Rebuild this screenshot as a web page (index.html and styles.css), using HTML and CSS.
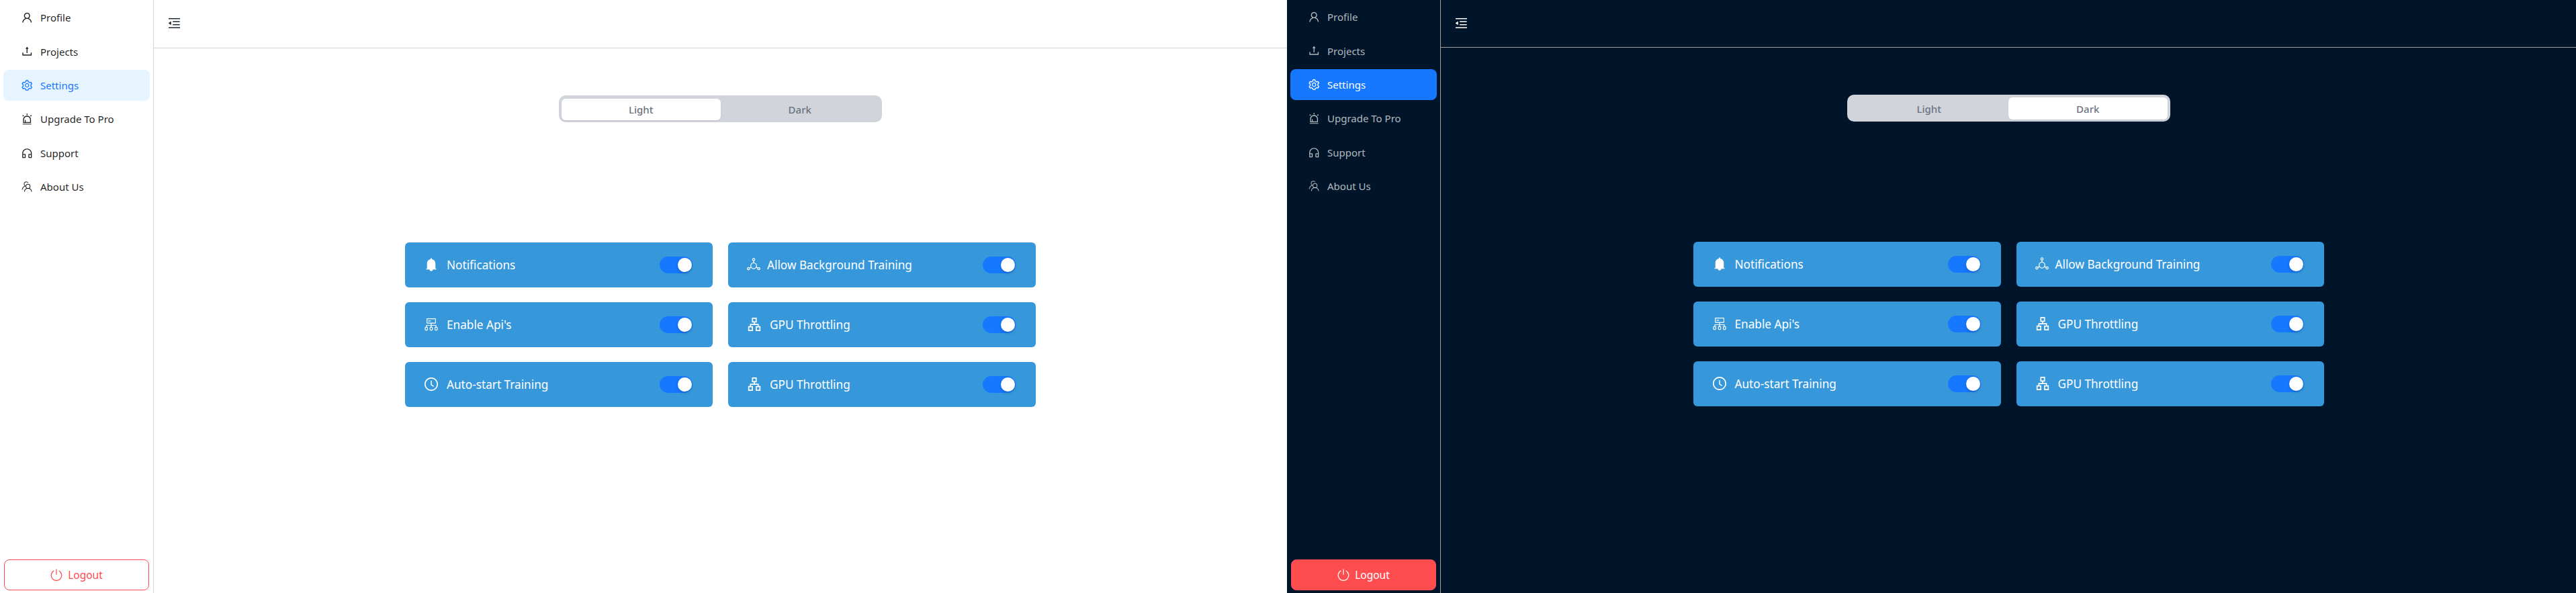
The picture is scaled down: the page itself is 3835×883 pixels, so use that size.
FILE: index.html
```html
<!DOCTYPE html>
<html lang="en">
<head>
<meta charset="utf-8">
<title>Settings</title>
<link rel="stylesheet" href="styles.css">
</head>
<body>
<svg class="defs" aria-hidden="true">
  <symbol id="i-user" viewBox="64 64 896 896"><path d="M858.5 763.6a374 374 0 0 0-80.6-119.5 375.63 375.63 0 0 0-119.5-80.6c-.4-.2-.8-.3-1.2-.5C719.5 518 760 444.7 760 362c0-137-111-248-248-248S264 225 264 362c0 82.7 40.5 156 102.8 201.1-.4.2-.8.3-1.2.5-44.8 18.9-85 46-119.5 80.6a375.63 375.63 0 0 0-80.6 119.5A371.7 371.7 0 0 0 136 901.8a8 8 0 0 0 8 8.2h60c4.4 0 7.9-3.5 8-7.8 2-77.2 33-149.5 87.8-204.3 56.7-56.7 132-87.9 212.2-87.9s155.5 31.2 212.2 87.9C779 752.7 810 825 812 902.2c.1 4.4 3.6 7.8 8 7.8h60a8 8 0 0 0 8-8.2c-1-47.8-10.9-94.3-29.5-138.2zM512 534c-45.9 0-89.1-17.9-121.6-50.4S340 407.9 340 362c0-45.9 17.9-89.1 50.4-121.6S466.1 190 512 190s89.1 17.9 121.6 50.4S684 316.1 684 362c0 45.9-17.9 89.1-50.4 121.6S557.9 534 512 534z"/></symbol>
  <symbol id="i-upload" viewBox="64 64 896 896"><path d="M400 317.7h73.9V656c0 4.4 3.6 8 8 8h60c4.4 0 8-3.6 8-8V317.7H624c6.7 0 10.4-7.7 6.3-12.9L518.3 163a8 8 0 0 0-12.6 0l-112 141.7c-4.1 5.3-.4 13 6.3 13zM878 626h-60c-4.4 0-8 3.6-8 8v154H214V634c0-4.4-3.6-8-8-8h-60c-4.4 0-8 3.6-8 8v198c0 17.7 14.3 32 32 32h684c17.7 0 32-14.3 32-32V634c0-4.4-3.6-8-8-8z"/></symbol>
  <symbol id="i-setting" viewBox="64 64 896 896"><path d="M924.8 625.7l-65.5-56c3.1-19 4.7-38.4 4.7-57.8s-1.6-38.8-4.7-57.8l65.5-56a32.03 32.03 0 0 0 9.3-35.2l-.9-2.6a443.74 443.74 0 0 0-79.7-137.9l-1.8-2.1a32.12 32.12 0 0 0-35.1-9.5l-81.3 28.9c-30-24.6-63.5-44-99.7-57.6l-15.7-85a32.05 32.05 0 0 0-25.8-25.7l-2.7-.5c-52.1-9.4-106.9-9.4-159 0l-2.7.5a32.05 32.05 0 0 0-25.8 25.7l-15.8 85.4a351.86 351.86 0 0 0-99 57.4l-81.9-29.1a32 32 0 0 0-35.1 9.5l-1.8 2.1a446.02 446.02 0 0 0-79.7 137.9l-.9 2.6c-4.5 12.5-.8 26.5 9.3 35.2l66.3 56.6c-3.1 18.8-4.6 38-4.6 57.1 0 19.2 1.5 38.4 4.6 57.1L99 625.5a32.03 32.03 0 0 0-9.3 35.2l.9 2.6c18.1 50.4 44.9 96.9 79.7 137.9l1.8 2.1a32.12 32.12 0 0 0 35.1 9.5l81.9-29.1c29.8 24.5 63.1 43.9 99 57.4l15.8 85.4a32.05 32.05 0 0 0 25.8 25.7l2.7.5a449.4 449.4 0 0 0 159 0l2.7-.5a32.05 32.05 0 0 0 25.8-25.7l15.7-85a350 350 0 0 0 99.7-57.6l81.3 28.9a32 32 0 0 0 35.1-9.5l1.8-2.1c34.8-41.1 61.6-87.5 79.7-137.9l.9-2.6c4.5-12.3.8-26.3-9.3-35zM788.3 465.9c2.5 15.1 3.8 30.6 3.8 46.1s-1.3 31-3.8 46.1l-6.6 40.1 74.7 63.9a370.03 370.03 0 0 1-42.6 73.6L721 702.8l-31.4 25.8c-23.9 19.6-50.5 35-79.3 45.8l-38.1 14.3-17.9 97a377.5 377.5 0 0 1-85 0l-17.9-97.2-37.8-14.5c-28.5-10.8-55-26.2-78.7-45.7l-31.4-25.9-93.4 33.2c-17-22.9-31.2-47.6-42.6-73.6l75.5-64.5-6.5-40c-2.4-14.9-3.7-30.3-3.7-45.5 0-15.3 1.2-30.6 3.7-45.5l6.5-40-75.5-64.5c11.3-26.1 25.6-50.7 42.6-73.6l93.4 33.2 31.4-25.9c23.7-19.5 50.2-34.9 78.7-45.7l37.9-14.3 17.9-97.2c28.1-3.2 56.8-3.2 85 0l17.9 97 38.1 14.3c28.7 10.8 55.4 26.2 79.3 45.8l31.4 25.8 92.8-32.9c17 22.9 31.2 47.6 42.6 73.6L781.8 426l6.5 39.9zM512 326c-97.2 0-176 78.8-176 176s78.8 176 176 176 176-78.8 176-176-78.8-176-176-176zm79.2 255.2A111.6 111.6 0 0 1 512 614c-29.9 0-58-11.7-79.2-32.8A111.6 111.6 0 0 1 400 502c0-29.9 11.7-58 32.8-79.2C454 401.6 482.1 390 512 390c29.9 0 58 11.6 79.2 32.8A111.6 111.6 0 0 1 624 502c0 29.9-11.7 58-32.8 79.2z"/></symbol>
  <symbol id="i-alert" viewBox="64 64 896 896"><path d="M193 796c0 17.7 14.3 32 32 32h574c17.7 0 32-14.3 32-32V563c0-176.2-142.8-319-319-319S193 386.8 193 563v233zm72-233c0-136.4 110.6-247 247-247s247 110.6 247 247v193H404V585c0-5.5-4.5-10-10-10h-44c-5.5 0-10 4.5-10 10v171h-75V563zm-48.1-252.5l39.6-39.6c3.1-3.1 3.1-8.2 0-11.3l-67.9-67.9a8.03 8.03 0 0 0-11.3 0l-39.6 39.6a8.03 8.03 0 0 0 0 11.3l67.9 67.9c3.1 3.1 8.1 3.1 11.3 0zm669.6-79.2l-39.6-39.6a8.03 8.03 0 0 0-11.3 0l-67.9 67.9a8.03 8.03 0 0 0 0 11.3l39.6 39.6c3.1 3.1 8.2 3.1 11.3 0l67.9-67.9c3.1-3.2 3.1-8.2 0-11.3zM832 892H192c-17.7 0-32 14.3-32 32v24c0 4.4 3.6 8 8 8h688c4.4 0 8-3.6 8-8v-24c0-17.7-14.3-32-32-32zM484 180h56c4.4 0 8-3.6 8-8V76c0-4.4-3.6-8-8-8h-56c-4.4 0-8 3.6-8 8v96c0 4.4 3.6 8 8 8z"/></symbol>
  <symbol id="i-support" viewBox="64 64 896 896"><path d="M512 128c-212.1 0-384 171.9-384 384v360c0 13.3 10.7 24 24 24h184c35.3 0 64-28.7 64-64V624c0-35.3-28.7-64-64-64H200v-48c0-172.3 139.7-312 312-312s312 139.7 312 312v48H688c-35.3 0-64 28.7-64 64v208c0 35.3 28.7 64 64 64h184c13.3 0 24-10.7 24-24V512c0-212.1-171.9-384-384-384zM328 632v192H200V632h128zm496 192H696V632h128v192z"/></symbol>
  <symbol id="i-team" viewBox="0 0 16 16"><g fill="none" stroke="currentColor" stroke-width="1"><circle cx="9.4" cy="7.2" r="3"/><path d="M4.2 15c.2-3 2.400-4.900 5.200-4.900s5 1.900 5.200 4.900"/><path d="M9.6 2.200C9 1.300 8 .8 7 .8 5.200.8 3.900 2.200 3.900 4c0 1.100.5 2.100 1.400 2.700C3 7.500 1.400 9.700 1 12.100"/></g></symbol>
  <symbol id="i-fold" viewBox="64 64 896 896"><path d="M408 442h480c4.4 0 8-3.6 8-8v-56c0-4.4-3.6-8-8-8H408c-4.4 0-8 3.6-8 8v56c0 4.4 3.6 8 8 8zm-8 204c0 4.4 3.6 8 8 8h480c4.4 0 8-3.6 8-8v-56c0-4.4-3.6-8-8-8H408c-4.4 0-8 3.6-8 8v56zm504-486H120c-4.4 0-8 3.6-8 8v56c0 4.4 3.6 8 8 8h784c4.4 0 8-3.6 8-8v-56c0-4.4-3.6-8-8-8zm0 632H120c-4.4 0-8 3.6-8 8v56c0 4.4 3.6 8 8 8h784c4.4 0 8-3.6 8-8v-56c0-4.4-3.6-8-8-8zM115.4 518.9L271.7 642c5.8 4.6 14.4.5 14.4-6.9V388.9c0-7.4-8.5-11.5-14.4-6.9L115.4 505.1a8.74 8.74 0 0 0 0 13.8z"/></symbol>
  <symbol id="i-power" viewBox="0 0 16 16"><g fill="none" stroke="currentColor" stroke-width="1.1"><path d="M11.2 2.500a6.900 6.900 0 1 1-6.400 0"/><path d="M8 .5v7.300"/></g></symbol>
  <symbol id="i-bell" viewBox="64 64 896 896"><path d="M816 768h-24V428c0-141.1-104.3-257.8-240-277.2V112c0-22.1-17.9-40-40-40s-40 17.9-40 40v38.8C336.3 170.2 232 286.9 232 428v340h-24c-17.7 0-32 14.3-32 32v32c0 4.4 3.6 8 8 8h216c0 61.8 50.2 112 112 112s112-50.2 112-112h216c4.4 0 8-3.6 8-8v-32c0-17.7-14.3-32-32-32z"/></symbol>
  <symbol id="i-clock" viewBox="64 64 896 896"><path d="M512 64C264.6 64 64 264.6 64 512s200.6 448 448 448 448-200.6 448-448S759.4 64 512 64zm0 820c-205.4 0-372-166.6-372-372s166.6-372 372-372 372 166.6 372 372-166.6 372-372 372z"/><path d="M686.7 638.6L544.1 535.5V288c0-4.4-3.6-8-8-8H488c-4.4 0-8 3.6-8 8v275.4c0 2.6 1.2 5 3.3 6.5l165.4 120.6c3.6 2.6 8.6 1.8 11.2-1.7l28.6-39c2.6-3.7 1.8-8.7-1.8-11.2z"/></symbol>
  <symbol id="i-apartment" viewBox="64 64 896 896"><path d="M908 640H804V488c0-4.4-3.6-8-8-8H548v-96h108c8.8 0 16-7.2 16-16V80c0-8.8-7.2-16-16-16H368c-8.8 0-16 7.2-16 16v288c0 8.8 7.2 16 16 16h108v96H228c-4.4 0-8 3.6-8 8v152H116c-8.8 0-16 7.2-16 16v288c0 8.8 7.2 16 16 16h288c8.8 0 16-7.2 16-16V656c0-8.8-7.2-16-16-16H292v-88h440v88H620c-8.8 0-16 7.2-16 16v288c0 8.8 7.2 16 16 16h288c8.8 0 16-7.2 16-16V656c0-8.8-7.2-16-16-16zm-564 76v168H176V716h168zm84-408V140h168v168H428zm420 576H680V716h168v168z"/></symbol>
  <symbol id="i-cluster" viewBox="0 0 20 20"><g fill="none" stroke="currentColor" stroke-width="1.2"><rect x="3.6" y="1.6" width="12.8" height="6.600" rx=".6"/><path d="M5.400 4.900h4"/><path d="M10 8.200v3.300M3 14v-2.500h14V14M10 11.500V14"/><rect x="1" y="14.200" width="3.400" height="4.400" rx="1"/><rect x="8.300" y="14.200" width="3.400" height="4.400" rx="1"/><rect x="15.600" y="14.200" width="3.400" height="4.400" rx="1"/></g></symbol>
  <symbol id="i-unit" viewBox="0 0 20 20"><g fill="none" stroke="currentColor" stroke-width="1.200"><circle cx="10" cy="2.600" r="1.700"/><circle cx="2.400" cy="16" r="1.700"/><circle cx="17.600" cy="16" r="1.700"/><circle cx="10" cy="11.800" r="4.300"/><path d="M10 4.300v3.200M3.900 15l2.500-1.300M16.100 15l-2.500-1.300"/></g></symbol>
</svg>

<main class="screens">
  <section class="panel panel--light">
    <aside class="sidebar">
      <nav class="menu">
        <a class="menu-item"><svg class="menu-icon"><use href="#i-user"/></svg><span>Profile</span></a>
        <a class="menu-item"><svg class="menu-icon"><use href="#i-upload"/></svg><span>Projects</span></a>
        <a class="menu-item menu-item--active"><svg class="menu-icon"><use href="#i-setting"/></svg><span>Settings</span></a>
        <a class="menu-item"><svg class="menu-icon"><use href="#i-alert"/></svg><span>Upgrade To Pro</span></a>
        <a class="menu-item"><svg class="menu-icon"><use href="#i-support"/></svg><span>Support</span></a>
        <a class="menu-item"><svg class="menu-icon"><use href="#i-team"/></svg><span>About Us</span></a>
      </nav>
      <button class="logout"><svg class="logout-icon"><use href="#i-power"/></svg><span>Logout</span></button>
    </aside>
    <div class="main">
      <header class="topbar"><svg class="fold-icon"><use href="#i-fold"/></svg></header>
      <div class="content">
        <div class="theme-switch">
          <div class="theme-option theme-option--on">Light</div>
          <div class="theme-option">Dark</div>
        </div>
        <div class="cards">
          <div class="card"><svg class="card-icon"><use href="#i-bell"/></svg><span class="card-label">Notifications</span><span class="switch"><span class="knob"></span></span></div>
          <div class="card card--tight"><svg class="card-icon"><use href="#i-unit"/></svg><span class="card-label">Allow Background Training</span><span class="switch"><span class="knob"></span></span></div>
          <div class="card"><svg class="card-icon"><use href="#i-cluster"/></svg><span class="card-label">Enable Api's</span><span class="switch"><span class="knob"></span></span></div>
          <div class="card"><svg class="card-icon"><use href="#i-apartment"/></svg><span class="card-label">GPU Throttling</span><span class="switch"><span class="knob"></span></span></div>
          <div class="card"><svg class="card-icon"><use href="#i-clock"/></svg><span class="card-label">Auto-start Training</span><span class="switch"><span class="knob"></span></span></div>
          <div class="card"><svg class="card-icon"><use href="#i-apartment"/></svg><span class="card-label">GPU Throttling</span><span class="switch"><span class="knob"></span></span></div>
        </div>
      </div>
    </div>
  </section>

  <section class="panel panel--dark">
    <aside class="sidebar">
      <nav class="menu">
        <a class="menu-item"><svg class="menu-icon"><use href="#i-user"/></svg><span>Profile</span></a>
        <a class="menu-item"><svg class="menu-icon"><use href="#i-upload"/></svg><span>Projects</span></a>
        <a class="menu-item menu-item--active"><svg class="menu-icon"><use href="#i-setting"/></svg><span>Settings</span></a>
        <a class="menu-item"><svg class="menu-icon"><use href="#i-alert"/></svg><span>Upgrade To Pro</span></a>
        <a class="menu-item"><svg class="menu-icon"><use href="#i-support"/></svg><span>Support</span></a>
        <a class="menu-item"><svg class="menu-icon"><use href="#i-team"/></svg><span>About Us</span></a>
      </nav>
      <button class="logout"><svg class="logout-icon"><use href="#i-power"/></svg><span>Logout</span></button>
    </aside>
    <div class="main">
      <header class="topbar"><svg class="fold-icon"><use href="#i-fold"/></svg></header>
      <div class="content">
        <div class="theme-switch">
          <div class="theme-option">Light</div>
          <div class="theme-option theme-option--on">Dark</div>
        </div>
        <div class="cards">
          <div class="card"><svg class="card-icon"><use href="#i-bell"/></svg><span class="card-label">Notifications</span><span class="switch"><span class="knob"></span></span></div>
          <div class="card card--tight"><svg class="card-icon"><use href="#i-unit"/></svg><span class="card-label">Allow Background Training</span><span class="switch"><span class="knob"></span></span></div>
          <div class="card"><svg class="card-icon"><use href="#i-cluster"/></svg><span class="card-label">Enable Api's</span><span class="switch"><span class="knob"></span></span></div>
          <div class="card"><svg class="card-icon"><use href="#i-apartment"/></svg><span class="card-label">GPU Throttling</span><span class="switch"><span class="knob"></span></span></div>
          <div class="card"><svg class="card-icon"><use href="#i-clock"/></svg><span class="card-label">Auto-start Training</span><span class="switch"><span class="knob"></span></span></div>
          <div class="card"><svg class="card-icon"><use href="#i-apartment"/></svg><span class="card-label">GPU Throttling</span><span class="switch"><span class="knob"></span></span></div>
        </div>
      </div>
    </div>
  </section>
</main>
</body>
</html>
```
FILE: styles.css
```css
* { box-sizing: border-box; }

html, body {
  margin: 0;
  height: 883px;
  overflow: hidden;
  background: #fff;
  font-family: "Noto Sans", "Open Sans", sans-serif;
}

.defs { display: none; }

.screens {
  display: flex;
  height: 883px;
}

.panel {
  display: flex;
  height: 883px;
}

.panel--light {
  flex: 0 0 1916px;
  background: #fff;
  color: rgba(0, 0, 0, .88);
  --line: #d4d4d4;
  --menu-text: rgba(0, 0, 0, .88);
  --active-bg: #e6f4ff;
  --active-text: #1677ff;
}

.panel--dark {
  flex: 1;
  background: #001529;
  color: #fff;
  --line: #a39e9e;
  --menu-text: rgba(255, 255, 255, .7);
  --active-bg: #1677ff;
  --active-text: #fff;
}

/* sidebar */
.sidebar {
  flex: 0 0 229px;
  display: flex;
  flex-direction: column;
  border-right: 1px solid var(--line);
}

.menu {
  display: flex;
  flex-direction: column;
  gap: 4px;
  padding: 3px 5px 0;
}

.panel--dark .menu { padding-top: 2px; }

.menu-item {
  height: 46.4px;
  display: flex;
  align-items: center;
  gap: 12px;
  padding-left: 26.5px;
  border-radius: 8px;
  font-size: 15px;
  color: var(--menu-text);
}

.menu-item--active {
  background: var(--active-bg);
  color: var(--active-text);
}

.menu-icon {
  width: 16.5px;
  height: 16.5px;
  flex: none;
  fill: currentColor;
}

.logout {
  margin: auto 6px 4px;
  height: 46px;
  display: flex;
  align-items: center;
  justify-content: center;
  gap: 8px;
  border: 1px solid #ff4d4f;
  border-radius: 8px;
  background: transparent;
  color: #ff4d4f;
  font: inherit;
  font-size: 15.5px;
}

.panel--dark .logout {
  background: #ff4d4f;
  color: #fff;
}

.logout-icon {
  width: 18px;
  height: 18px;
  flex: none;
}

/* main */
.main {
  flex: 1;
  min-width: 0;
  display: flex;
  flex-direction: column;
}

.topbar {
  height: 72px;
  flex: none;
  display: flex;
  align-items: center;
  padding: 0 0 2px 21px;
  border-bottom: 1px solid var(--line);
}

.panel--dark .topbar { height: 71px; }

.fold-icon {
  width: 19px;
  height: 19px;
  fill: currentColor;
  color: #1f2937;
}

.panel--dark .fold-icon { color: #fff; }

.content {
  display: flex;
  flex-direction: column;
  align-items: center;
  padding-top: 70px;
}

.theme-switch {
  width: 481px;
  height: 40px;
  padding: 5px 4px 3px;
  display: grid;
  grid-template-columns: 1fr 1fr;
  background: #d1d5db;
  border-radius: 10px;
}

.panel--dark .theme-switch { padding-top: 4px; }

.theme-option {
  display: flex;
  align-items: center;
  justify-content: center;
  border-radius: 6px;
  color: #6b7280;
  font-size: 15px;
  font-weight: 500;
}

.theme-option--on {
  background: #fff;
  box-shadow: 0 1px 2px rgba(0, 0, 0, .08);
}

.cards {
  margin-top: 179px;
  display: grid;
  grid-template-columns: 458px 458px;
  grid-auto-rows: 66.5px;
  column-gap: 23px;
  row-gap: 22.5px;
}

.card {
  display: flex;
  align-items: center;
  padding: 0 30px 0 29px;
  background: #3797db;
  border-radius: 6px;
  color: #fff;
}

.card-icon {
  width: 20px;
  height: 20px;
  flex: none;
  fill: currentColor;
  margin-right: 13px;
}

.card--tight .card-icon {
  margin: 0 10px 0 -1px;
}

.card-label {
  flex: 1;
  padding-top: 1px;
  font-size: 17.2px;
  line-height: 24px;
}

.switch {
  width: 49px;
  height: 25px;
  flex: none;
  display: flex;
  align-items: center;
  justify-content: flex-end;
  padding-right: 1px;
  border-radius: 13px;
  background: #1677ff;
}

.knob {
  width: 21px;
  height: 21px;
  border-radius: 50%;
  background: #fff;
  box-shadow: 0 2px 4px rgba(0, 35, 11, .2);
}
```
